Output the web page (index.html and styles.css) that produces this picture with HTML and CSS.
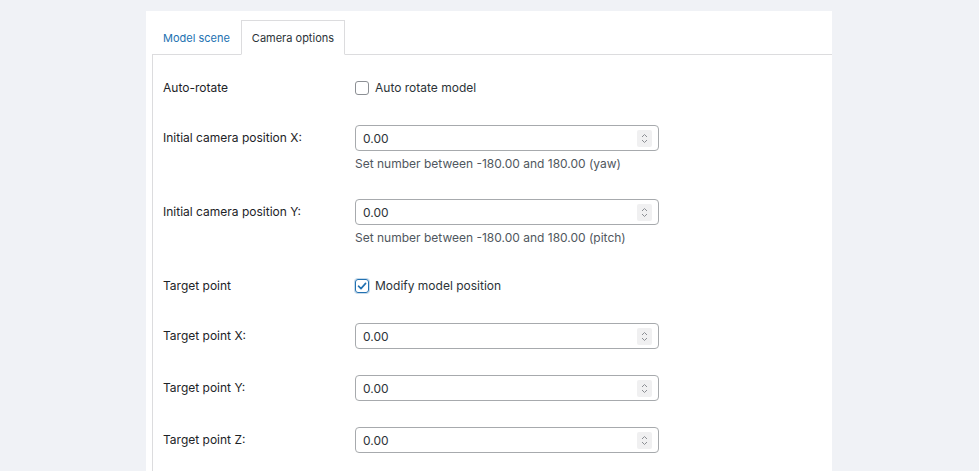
FILE: index.html
```html
<!DOCTYPE html>
<html lang="en">
<head>
<meta charset="utf-8">
<title>Camera options</title>
<link rel="stylesheet" href="styles.css">
</head>
<body>
<div class="panel">
  <div class="tabs">
    <div class="tab">Model scene</div>
    <div class="tab active">Camera options</div>
  </div>
  <div class="box">
    <div class="row check-row">
      <div class="label">Auto-rotate</div>
      <div class="field">
        <label class="check"><span class="cb"></span>Auto rotate model</label>
      </div>
    </div>
    <div class="row">
      <div class="label">Initial camera position X:</div>
      <div class="field">
        <div class="num"><span>0.00</span><span class="spin"><svg width="7" height="11" viewBox="0 0 7 11"><path d="M1 4 L3.5 1.5 L6 4 M1 7 L3.5 9.5 L6 7" fill="none" stroke="#8c8f94" stroke-width="1"/></svg></span></div>
        <div class="desc">Set number between -180.00 and 180.00 (yaw)</div>
      </div>
    </div>
    <div class="row">
      <div class="label">Initial camera position Y:</div>
      <div class="field">
        <div class="num"><span>0.00</span><span class="spin"><svg width="7" height="11" viewBox="0 0 7 11"><path d="M1 4 L3.5 1.5 L6 4 M1 7 L3.5 9.5 L6 7" fill="none" stroke="#8c8f94" stroke-width="1"/></svg></span></div>
        <div class="desc">Set number between -180.00 and 180.00 (pitch)</div>
      </div>
    </div>
    <div class="row check-row">
      <div class="label">Target point</div>
      <div class="field">
        <label class="check"><span class="cb on"><svg width="14" height="14" viewBox="0 0 14 14"><path d="M3.5 7.2 L6 9.6 L10.6 4.4" fill="none" stroke="#2271b1" stroke-width="1.6" stroke-linecap="round" stroke-linejoin="round"/></svg></span>Modify model position</label>
      </div>
    </div>
    <div class="row">
      <div class="label">Target point X:</div>
      <div class="field">
        <div class="num"><span>0.00</span><span class="spin"><svg width="7" height="11" viewBox="0 0 7 11"><path d="M1 4 L3.5 1.5 L6 4 M1 7 L3.5 9.5 L6 7" fill="none" stroke="#8c8f94" stroke-width="1"/></svg></span></div>
      </div>
    </div>
    <div class="row">
      <div class="label">Target point Y:</div>
      <div class="field">
        <div class="num"><span>0.00</span><span class="spin"><svg width="7" height="11" viewBox="0 0 7 11"><path d="M1 4 L3.5 1.5 L6 4 M1 7 L3.5 9.5 L6 7" fill="none" stroke="#8c8f94" stroke-width="1"/></svg></span></div>
      </div>
    </div>
    <div class="row">
      <div class="label">Target point Z:</div>
      <div class="field">
        <div class="num"><span>0.00</span><span class="spin"><svg width="7" height="11" viewBox="0 0 7 11"><path d="M1 4 L3.5 1.5 L6 4 M1 7 L3.5 9.5 L6 7" fill="none" stroke="#8c8f94" stroke-width="1"/></svg></span></div>
      </div>
    </div>
  </div>
</div>
</body>
</html>
```
FILE: styles.css
```css
html, body {
  margin: 0;
  padding: 0;
}
body {
  background: #f0f2f6;
  font-family: Inter, "Liberation Sans", sans-serif;
  font-size: 12px;
  color: #1d2327;
  padding: 11px 0 0 146px;
  height: 471px;
  box-sizing: border-box;
  overflow: hidden;
}
.panel {
  width: 686px;
  background: #fff;
  height: 460px;
  overflow: hidden;
}
.tabs {
  display: flex;
  align-items: flex-end;
  height: 43px;
  padding-left: 6px;
  box-sizing: border-box;
}
.tab {
  position: relative;
  z-index: 1;
  margin-bottom: -1px;
  padding: 10px 10px 9px;
  line-height: 14px;
  font-size: 11px;
  border: 1px solid transparent;
  color: #2271b1;
}
.tab.active {
  color: #2c3338;
  background: #fff;
  border-color: #dcdcde;
  border-bottom-color: #fff;
}
.box {
  margin-left: 6px;
  border-top: 1px solid #dcdcde;
  border-left: 1px solid #dcdcde;
  padding: 7px 0 0 10px;
  height: 420px;
}
.row {
  display: flex;
  padding: 13px 0;
}
.row.check-row {
  padding: 17px 0 15px;
}
.label {
  width: 192px;
  flex: none;
  line-height: 26px;
  color: #1d2327;
}
.check-row .label {
  line-height: 18px;
}
.field {
  display: flex;
  flex-direction: column;
}
.check {
  display: flex;
  align-items: center;
  gap: 6px;
  line-height: 18px;
  color: #2c3338;
}
.cb {
  width: 14px;
  height: 14px;
  box-sizing: border-box;
  border: 1px solid #8c8f94;
  border-radius: 3px;
  display: flex;
  align-items: center;
  justify-content: center;
}
.cb.on {
  border: 1.5px solid #2271b1;
  box-shadow: 0 0 0 1px rgba(34, 113, 177, 0.25);
}
.cb svg {
  flex: none;
}
.num {
  width: 304px;
  height: 26px;
  box-sizing: border-box;
  border: 1px solid #a7aaad;
  border-radius: 4px;
  display: flex;
  align-items: center;
  justify-content: space-between;
  padding: 0 6px 0 7px;
  color: #2c3338;
}
.spin {
  width: 15px;
  height: 17px;
  background: #f0f0f1;
  border-radius: 2px;
  display: flex;
  align-items: center;
  justify-content: center;
}
.desc {
  margin-top: 4px;
  line-height: 18px;
  color: #50575e;
}
```
